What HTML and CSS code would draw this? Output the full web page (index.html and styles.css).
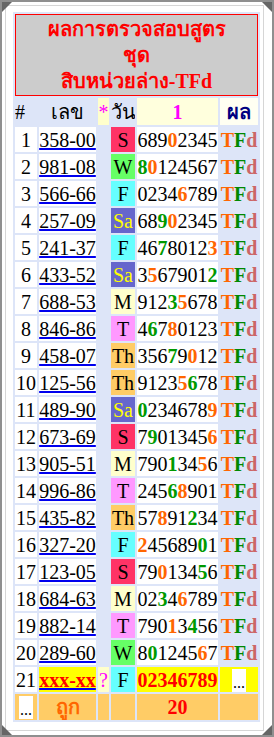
FILE: index.html
```html
<!DOCTYPE html>
<html lang="th">
<head>
    <meta charset="UTF-8">
    <meta name="viewport" content="width=device-width, initial-scale=1.0">
    <title>ผลการตรวจสอบสูตร</title>

    <link rel="stylesheet" href="styles.css">
</head>
<body>
    <div class="frame">
        <span class="corner corner-tl"></span>
        <span class="corner corner-tr"></span>
        <span class="corner corner-bl"></span>
        <span class="corner corner-br"></span>

        <div class="inner">
            <table class="result">
                <colgroup>
                    <col style="width: 22px">
                    <col style="width: 57px">
                    <col style="width: 11px">
                    <col style="width: 24px">
                    <col style="width: 81px">
                    <col style="width: 38px">
                </colgroup>
                <tr>
                    <td colspan="6" class="title">ผลการตรวจสอบสูตร<br>ชุด<br>สิบหน่วยล่าง-TFd</td>
                </tr>
                <tr class="head">
                    <td class="h-no">#</td>
                    <td class="h-num">เลข</td>
                    <td class="h-star">*</td>
                    <td class="h-day">วัน</td>
                    <td class="h-set">1</td>
                    <td class="h-res">ผล</td>
                </tr>

                <tr><td class="no">1</td><td class="num"><a>358-00</a></td><td></td><td class="day sun">S</td><td class="digits">689<b class="o">0</b>2345</td><td class="res"><b class="t">T</b><b class="f">F</b><b class="d">d</b></td></tr>
                <tr><td class="no">2</td><td class="num"><a>981-08</a></td><td></td><td class="day wed">W</td><td class="digits"><b class="g">8</b><b class="o">0</b>124567</td><td class="res"><b class="t">T</b><b class="f">F</b><b class="d">d</b></td></tr>
                <tr><td class="no">3</td><td class="num"><a>566-66</a></td><td></td><td class="day fri">F</td><td class="digits">0234<b class="o">6</b>789</td><td class="res"><b class="t">T</b><b class="f">F</b><b class="d">d</b></td></tr>
                <tr><td class="no">4</td><td class="num"><a>257-09</a></td><td></td><td class="day sat">Sa</td><td class="digits">68<b class="g">9</b><b class="o">0</b>2345</td><td class="res"><b class="t">T</b><b class="f">F</b><b class="d">d</b></td></tr>
                <tr><td class="no">5</td><td class="num"><a>241-37</a></td><td></td><td class="day fri">F</td><td class="digits">46<b class="g">7</b>8012<b class="o">3</b></td><td class="res"><b class="t">T</b><b class="f">F</b><b class="d">d</b></td></tr>
                <tr><td class="no">6</td><td class="num"><a>433-52</a></td><td></td><td class="day sat">Sa</td><td class="digits">3<b class="o">5</b>67901<b class="g">2</b></td><td class="res"><b class="t">T</b><b class="f">F</b><b class="d">d</b></td></tr>
                <tr><td class="no">7</td><td class="num"><a>688-53</a></td><td></td><td class="day mon">M</td><td class="digits">912<b class="g">3</b><b class="o">5</b>678</td><td class="res"><b class="t">T</b><b class="f">F</b><b class="d">d</b></td></tr>
                <tr><td class="no">8</td><td class="num"><a>846-86</a></td><td></td><td class="day tue">T</td><td class="digits">4<b class="g">6</b>7<b class="o">8</b>0123</td><td class="res"><b class="t">T</b><b class="f">F</b><b class="d">d</b></td></tr>
                <tr><td class="no">9</td><td class="num"><a>458-07</a></td><td></td><td class="day thu">Th</td><td class="digits">356<b class="g">7</b>9<b class="o">0</b>12</td><td class="res"><b class="t">T</b><b class="f">F</b><b class="d">d</b></td></tr>
                <tr><td class="no">10</td><td class="num"><a>125-56</a></td><td></td><td class="day thu">Th</td><td class="digits">9123<b class="o">5</b><b class="g">6</b>78</td><td class="res"><b class="t">T</b><b class="f">F</b><b class="d">d</b></td></tr>
                <tr><td class="no">11</td><td class="num"><a>489-90</a></td><td></td><td class="day sat">Sa</td><td class="digits"><b class="g">0</b>234678<b class="o">9</b></td><td class="res"><b class="t">T</b><b class="f">F</b><b class="d">d</b></td></tr>
                <tr><td class="no">12</td><td class="num"><a>673-69</a></td><td></td><td class="day sun">S</td><td class="digits">7<b class="g">9</b>01345<b class="o">6</b></td><td class="res"><b class="t">T</b><b class="f">F</b><b class="d">d</b></td></tr>
                <tr><td class="no">13</td><td class="num"><a>905-51</a></td><td></td><td class="day mon">M</td><td class="digits">790<b class="g">1</b>34<b class="o">5</b>6</td><td class="res"><b class="t">T</b><b class="f">F</b><b class="d">d</b></td></tr>
                <tr><td class="no">14</td><td class="num"><a>996-86</a></td><td></td><td class="day tue">T</td><td class="digits">245<b class="g">6</b><b class="o">8</b>901</td><td class="res"><b class="t">T</b><b class="f">F</b><b class="d">d</b></td></tr>
                <tr><td class="no">15</td><td class="num"><a>435-82</a></td><td></td><td class="day thu">Th</td><td class="digits">57<b class="o">8</b>91<b class="g">2</b>34</td><td class="res"><b class="t">T</b><b class="f">F</b><b class="d">d</b></td></tr>
                <tr><td class="no">16</td><td class="num"><a>327-20</a></td><td></td><td class="day fri">F</td><td class="digits"><b class="o">2</b>45689<b class="g">0</b>1</td><td class="res"><b class="t">T</b><b class="f">F</b><b class="d">d</b></td></tr>
                <tr><td class="no">17</td><td class="num"><a>123-05</a></td><td></td><td class="day sun">S</td><td class="digits">79<b class="o">0</b>134<b class="g">5</b>6</td><td class="res"><b class="t">T</b><b class="f">F</b><b class="d">d</b></td></tr>
                <tr><td class="no">18</td><td class="num"><a>684-63</a></td><td></td><td class="day mon">M</td><td class="digits">02<b class="g">3</b>4<b class="o">6</b>789</td><td class="res"><b class="t">T</b><b class="f">F</b><b class="d">d</b></td></tr>
                <tr><td class="no">19</td><td class="num"><a>882-14</a></td><td></td><td class="day tue">T</td><td class="digits">790<b class="o">1</b>3<b class="g">4</b>56</td><td class="res"><b class="t">T</b><b class="f">F</b><b class="d">d</b></td></tr>
                <tr><td class="no">20</td><td class="num"><a>289-60</a></td><td></td><td class="day wed">W</td><td class="digits">8<b class="g">0</b>1245<b class="o">6</b>7</td><td class="res"><b class="t">T</b><b class="f">F</b><b class="d">d</b></td></tr>

                <tr class="next">
                    <td class="no">21</td>
                    <td class="num next-num"><a>xxx-xx</a></td>
                    <td class="next-q">?</td>
                    <td class="day fri">F</td>
                    <td class="next-digits">02346789</td>
                    <td class="next-res"><span class="dots">...</span></td>
                </tr>
                <tr class="total">
                    <td><span class="dots">...</span></td>
                    <td class="hit">ถูก</td>
                    <td></td>
                    <td></td>
                    <td class="count">20</td>
                    <td></td>
                </tr>
            </table>
        </div>
    </div>
</body>
</html>
```

FILE: styles.css
```css
body {
    margin: 0;
    background-color: white;
}

.frame {
    position: relative;
    box-sizing: border-box;
    width: 274px;
    height: 737px;
    border: 2px solid #8f8f8f;
    padding: 3px 8px 4px 3px;
}

.inner {
    box-sizing: border-box;
    height: 100%;
    border: 1px solid #d6d6d6;
    padding: 6px 0 0 7px;
}

/* resize corners of the little window */
.corner {
    position: absolute;
    width: 0;
    height: 0;
}
.corner-tl {
    top: 0;
    left: 0;
    border-top: 10px solid #666;
    border-right: 10px solid transparent;
}
.corner-tr {
    top: 0;
    right: 0;
    border-top: 10px solid #666;
    border-left: 10px solid transparent;
}
.corner-bl {
    bottom: 0;
    left: 0;
    border-bottom: 10px solid #666;
    border-right: 10px solid transparent;
}
.corner-br {
    bottom: 0;
    right: 0;
    border-bottom: 10px solid #666;
    border-left: 10px solid transparent;
}

.result {
    table-layout: fixed;
    width: 247px;
    border-spacing: 2px;
    background-color: #dde5f8;
    font-family: "Liberation Serif", "Times New Roman", serif;
    font-size: 20px;
    color: black;
}

.result td {
    padding: 0;
    height: 25px;
    line-height: 22px;
    text-align: center;
    vertical-align: middle;
    white-space: nowrap;
    overflow: hidden;
}

.title {
    background-color: #cccccc;
    border: 1px solid #ff0000;
    color: #ff0000;
    font-weight: bold;
    font-size: 20px;
    line-height: 26px !important;
    padding: 1px 0 !important;
}

.head td {
    height: 27px;
}
.h-no {
    text-align: left !important;
}
.h-star {
    background-color: #ffffcc;
    color: #ff00ff;
}
.h-set {
    background-color: #ffffdd;
    color: #ff00ff;
    font-weight: bold;
}
.h-res {
    background-color: #fffff2;
    color: #000080;
    font-weight: bold;
}

.no {
    background-color: white;
}

.num {
    background-color: white;
}
.num a {
    color: black;
    text-decoration: underline;
    text-decoration-color: #0000ee;
}

.day.sun { background-color: #ff3366; }
.day.mon { background-color: #ffffcc; }
.day.tue { background-color: #ff99ff; }
.day.wed { background-color: #66ff66; }
.day.thu { background-color: #ffcc66; }
.day.fri { background-color: #66ffff; }
.day.sat {
    background-color: #6666cc;
    color: #ffff00;
}

.digits {
    background-color: white;
}
.o { color: #ff6600; }
.g { color: #009900; }

.res .t { color: #ff6600; }
.res .f { color: #008800; }
.res .d { color: #cc6666; }

.next-num {
    background-color: #ffff00 !important;
}
.next-num a {
    color: #ff0000;
    font-weight: bold;
}
.next-q {
    background-color: #ffffcc;
    color: #ff00ff;
}
.next-digits {
    background-color: #ffff00;
    color: #ff0000;
    font-weight: bold;
}
.next-res {
    background-color: #ffff00;
}

.dots {
    display: inline-block;
    width: 14px;
    height: 23px;
    line-height: 28px;
    background-color: white;
    font-size: 16px;
    vertical-align: middle;
}

.total td {
    height: 26px;
    background-color: #ffcc66;
}
.hit {
    color: #ff6600;
    font-weight: bold;
    font-size: 20px;
}
.count {
    color: #ff0000;
    font-weight: bold;
}
```
